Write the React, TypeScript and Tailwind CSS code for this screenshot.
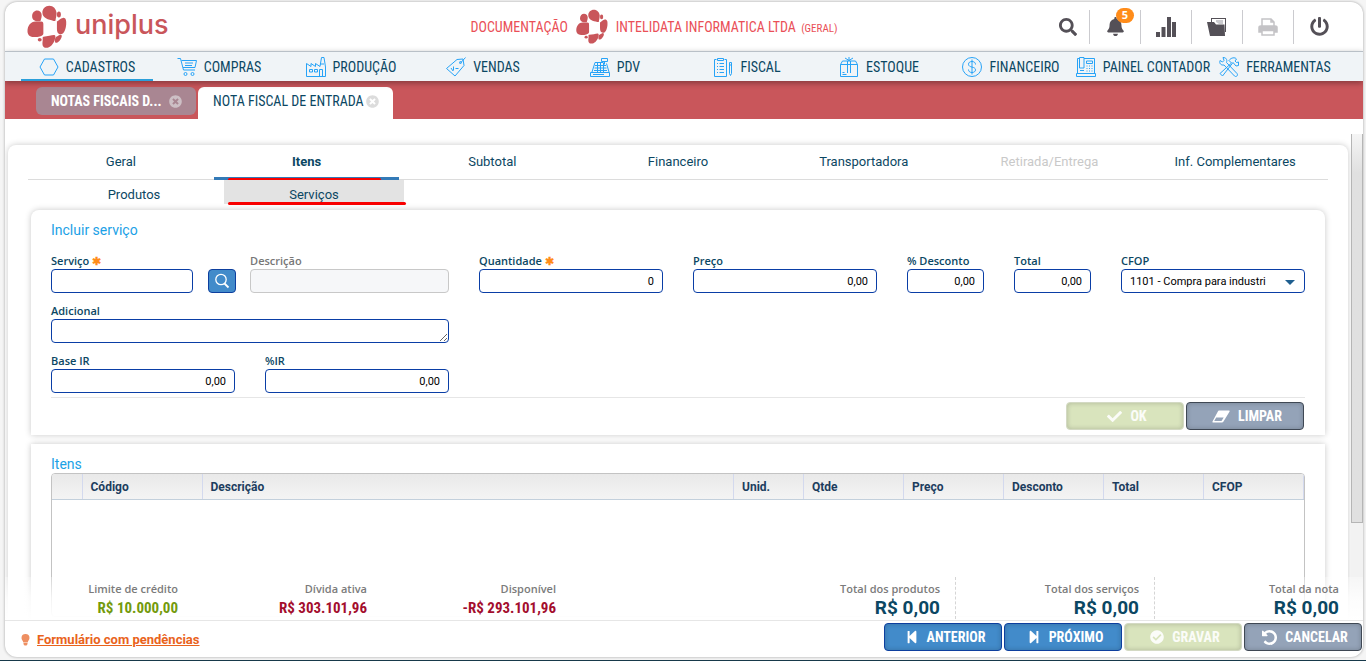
import React from 'react';
import clsx from 'clsx';
import {
  FaBell,
  FaCheck,
  FaCheckCircle,
  FaPowerOff,
  FaSearch,
  FaStepBackward,
  FaStepForward,
  FaTimesCircle,
} from 'react-icons/fa';

const narrow = "font-['Roboto_Condensed',Roboto,sans-serif]";

function PetalLogo({ className }: { className?: string }) {
  return (
    <svg viewBox="82 12 120 130" className={clsx('fill-[#c9565b]', className)} aria-hidden="true">
      <path d="M128 35c0-12 9-21 21-21s21 9 22 23c0 9-3 16-3 20 0 3-2 4-6 3-16-3-34-8-34-25z" />
      <path d="M97 46c0-10 7-17 15-17s14 5 14 14c0 8-3 13-3 16-1 3-5 2-9 2-9 0-17-4-17-15z" />
      <ellipse cx="178" cy="41" rx="6" ry="9" />
      <path d="M172 62c5-3 11-10 18-11 9-1 11 8 10 20-1 13-6 27-14 29-10 2-14-5-14-17z" />
      <path d="M107 62h17c6 0 7 3 7 9v27c0 5-4 7-11 9-14 4-37 4-37-16 0-16 10-29 24-29z" />
      <path d="M131 108c13-1 25-4 32-5 6-1 5 8 2 16-5 12-14 22-25 22-12 0-13-10-11-22 1-6-2-10 2-11z" />
      <path d="M170 108c5-2 11-8 15-6 4 3 0 13-5 18-4 5-11 8-13 5-2-4-1-15 3-17z" />
      <ellipse cx="120" cy="117" rx="6" ry="5" />
    </svg>
  );
}

function EraserIcon() {
  return (
    <svg viewBox="0 0 18 13" className="h-[13px] w-[18px] fill-current" aria-hidden="true">
      <path fillRule="evenodd" d="M7 .5h10q1 0 .6 1L11.500 11.500q-.6 1-1.500 1H1q-1 0-.5-1L6 1.200Q6.300.5 7 .5zM4.200 7.500L2.200 11h7.300l2.200-3.500z" />
    </svg>
  );
}

function UndoIcon() {
  return (
    <svg viewBox="0 0 1536 1536" className="size-[15px] fill-current" aria-hidden="true">
      <path d="M1536 768q0 156-61 298t-164 245-245 164-298 61q-172 0-327-72.500t-264-204.500q-7-10-6.500-22.500t8.500-20.500l137-138q10-9 25-9 16 2 23 12 73 95 179 147t225 52q104 0 198.500-40.500t163.500-109.500 109.500-163.500 40.500-198.500-40.500-198.500-109.500-163.500-163.500-109.500-198.500-40.500q-98 0-188 35.500t-160 101.500l137 138q31 30 14 69-17 40-59 40H64q-26 0-45-19T0 576V128q0-42 40-59 39-17 69 14l130 129q107-101 244.500-156.500t284.500-55.500q156 0 298 61t245 164 164 245 61 298z" />
    </svg>
  );
}

function LineIcon({ children }: { children: React.ReactNode }) {
  return (
    <svg
      viewBox="0 0 20 20"
      className="size-5 shrink-0 fill-none stroke-[#27a3f7]"
      strokeWidth="1"
      aria-hidden="true"
    >
      {children}
    </svg>
  );
}

const menu = [
  { label: 'CADASTROS', icon: <path d="M5.500 2h9l4.500 8-4.500 8h-9L1 10z" /> },
  {
    label: 'COMPRAS',
    icon: (
      <>
        <path d="M.5 1.500h3l3 11.500h11.500M4.500 3.500h15l-1.500 7H6M8 6h8M8 8.500h7" />
        <circle cx="8.500" cy="17" r="1.500" />
        <circle cx="15.500" cy="17" r="1.500" />
      </>
    ),
  },
  {
    label: 'PRODUÇÃO',
    icon: <path d="M.5 19.500v-13l4.500 3v-3l4.500 3v-3l4.500 3L15.500.500h2.500l1.500 9.500v9.500zM3.500 12.500h3v2.500h-3zM8.500 12.500h3v2.500h-3zM13.500 19v-6.500h3V19M14 7h4" />,
  },
  {
    label: 'VENDAS',
    icon: (
      <>
        <path d="M.5 11.500L11 2.500l6-.5 1 6.500L9 19z" />
        <path d="M14 6.500L19.500.500M5 11l2 3M7.500 9.500v4M9.500 11.500h3" />
        <circle cx="14.500" cy="5.500" r="1" />
      </>
    ),
  },
  {
    label: 'PDV',
    icon: <path d="M.5 15.500h19v4H.500zM2 15L5 5.500h8.500M16.500 6.500L19 15M11.500 1.500h6v3h-6zM14.500 4.500v3M5 8.500h11M4.500 11h12M4 13.500h13M7.500 6v9M10.500 6v9M13.500 6v9M3 17.500h11" />,
  },
  {
    label: 'FISCAL',
    icon: <path d="M3.500 2.500h-2v17h12v-17h-2M4.500 1.500h6v2h-6zM4 6.500h1M6.500 6.500H11M4 9.500h1M6.500 9.500H11M4 12.500h1M6.500 12.500H11M4 15.500h1M6.500 15.500H11M16.500 5.500h2v11l-1 2-1-2zM16.500 8h2" />,
  },
  {
    label: 'ESTOQUE',
    icon: <path d="M1.500 7.500h17v12h-17zM1.500 7.500l2-3.500h13l2 3.500M8.500 4v12M11.500 4v12M10 3.500L6 1M10 3.500L14 1M10 0v4M3.500 17.500h4M3.500 15.500h2" />,
  },
  {
    label: 'FINANCEIRO',
    icon: (
      <>
        <circle cx="10" cy="10" r="9.500" />
        <path d="M13.500 7.500c0-2-1.500-3-3.500-3s-3.500 1-3.500 2.700c0 3.800 7 2 7 5.600 0 1.700-1.500 2.700-3.500 2.700s-3.500-1-3.500-3M10 2.500v15" />
      </>
    ),
  },
  {
    label: 'PAINEL CONTADOR',
    icon: <path d="M.5 16.500h19v3H.500zM1.500 16V1.500h2M8 1.500h10.500V16M3.500.500H8v10.500H3.500zM10.500 4h6v2.500h-6zM10.500 9h1M13 9h1M15.500 9h1M10.500 11.500h1M13 11.500h1M15.500 11.500h1M10.500 14h1M13 14h1M15.500 14h1M4 13.500h4" />,
  },
  {
    label: 'FERRAMENTAS',
    icon: <path d="M1 3.500l2.500 1.500L5 3.500 4 .500c3 0 4.500 2 3.500 5l10.500 11c1.500 2-1 4-2.500 2.500L5 8C2 8.500 0 6.500 1 3.500zM10 3.500c2-3 6-3.500 7.500-1.500L16 4l1.500 1.500L19.500 5v3.500L17 9l-3-3.500L3.500 19 1 16.500 12.500 6z" />,
  },
];

function TopBar() {
  const cell = 'flex h-[34px] w-[51px] items-center justify-center border-r border-[#cbcbcf]';
  return (
    <header className="flex h-[49px] shrink-0 items-center justify-between pr-[18px] pl-[22px] text-[#545057]">
      <div className="flex flex-1 items-center gap-2 text-[#c9565b]">
        <PetalLogo className="h-[43px] w-10" />
        <span className="pb-1 font-[Inter,sans-serif] text-[27px] leading-8 font-medium">uniplus</span>
      </div>
      <div className={clsx('flex items-center gap-2 pr-16 text-sm whitespace-nowrap text-[#ea4f57]', narrow)}>
        <span>DOCUMENTAÇÃO</span>
        <PetalLogo className="h-[35px] w-8" />
        <span>
          INTELIDATA INFORMATICA LTDA <span className="pl-0.5 text-[11px]">(GERAL)</span>
        </span>
      </div>
      <div className="flex flex-1 items-center justify-end">
        <button type="button" aria-label="Pesquisar" className="flex h-[34px] w-11 items-center justify-center border-r border-[#cbcbcf]">
          <FaSearch size={18} />
        </button>
        <button type="button" aria-label="Notificações" className={clsx(cell, 'relative')}>
          <FaBell size={19} />
          <span className="absolute -top-0.5 right-1.5 flex h-[15px] w-[18px] items-center justify-center rounded-full bg-[#ff8c1a] font-['Open_Sans',sans-serif] text-[11px] font-bold text-white">
            5
          </span>
        </button>
        <button type="button" aria-label="Indicadores" className={cell}>
          <svg viewBox="0 0 20 20" className="size-5 fill-current">
            <path d="M0 15h4v5H0zM5.500 10h4v10h-4zM11 0h4v20h-4zM16 5h4v15h-4z" />
          </svg>
        </button>
        <button type="button" aria-label="Arquivos" className={cell}>
          <svg viewBox="0 0 20 20" className="size-5 fill-current">
            <path d="M4 6V1h15v14h-1V2H5v4z" />
            <path d="M9 3h7v4h-4L9 5z" className="fill-[#cbcbcf]" />
            <path d="M0 5h7l2 2.500h8.500L18 19H3z" />
          </svg>
        </button>
        <button type="button" aria-label="Imprimir" disabled className={clsx(cell, 'text-[#c4c3c6]')}>
          <svg viewBox="0 0 20 18" className="h-[18px] w-5 fill-none stroke-current" strokeWidth="1.500">
            <path d="M4 8V1h9l3 3v4M13 1v3h3" />
            <path d="M1 14V9.500Q1 8 3 8h14q2 0 2 1.500V14h-3v-2H4v2z" className="fill-current" />
            <path d="M4 12.500h12V17H4z" className="fill-white" />
          </svg>
        </button>
        <button type="button" aria-label="Sair" className="flex h-[34px] w-[51px] items-center justify-center">
          <FaPowerOff size={19} />
        </button>
      </div>
    </header>
  );
}

function Menu() {
  return (
    <nav className="relative z-10 grid h-[30px] shrink-0 grid-cols-10 border-t border-[#b9c0c7] bg-[#f0f4f7] pr-[22px] pl-4 shadow-[0_2px_6px_rgba(0,0,0,0.35)]">
      {menu.map((item, i) => (
        <a
          key={item.label}
          href="#"
          className={clsx(
            'flex items-center justify-center gap-[7px] border-b-2 pt-0.5 text-sm whitespace-nowrap text-[#0b4763]',
            narrow,
            i === 0 ? 'border-[#2b9fda]' : 'border-transparent',
          )}
        >
          <LineIcon>{item.icon}</LineIcon>
          {item.label}
        </a>
      ))}
    </nav>
  );
}

function OpenTabs() {
  return (
    <div className={clsx('flex h-[38px] shrink-0 items-end gap-0.5 bg-[#c9565b] pl-[31px] text-sm whitespace-nowrap', narrow)}>
      <div className="mb-1 flex h-7 w-40 items-center justify-between rounded-md bg-[#a98692] pr-3.5 pl-[15px] font-bold text-white">
        <span>NOTAS FISCAIS D...</span>
        <button type="button" aria-label="Fechar Notas Fiscais" className="text-[#cdbfc5]">
          <FaTimesCircle size={13} />
        </button>
      </div>
      <div className="flex h-8 w-[195px] items-center justify-between rounded-t-md bg-white pr-3.5 pb-1 pl-[15px] text-[#0b4763]">
        <span>NOTA FISCAL DE ENTRADA</span>
        <button type="button" aria-label="Fechar Nota Fiscal" className="text-[#dcdcdc]">
          <FaTimesCircle size={13} />
        </button>
      </div>
    </div>
  );
}

const sections = ['Geral', 'Itens', 'Subtotal', 'Financeiro', 'Transportadora', 'Retirada/Entrega', 'Inf. Complementares'];

function SectionTabs() {
  return (
    <>
      <div className="mx-5 grid h-[35px] grid-cols-7 border-b border-[#dcdcdc]">
        {sections.map((name) => (
          <button
            key={name}
            type="button"
            disabled={name === 'Retirada/Entrega'}
            className={clsx(
              'relative -mb-px border-b-3 pt-0.5 text-[13px] text-[#0b4763] disabled:text-[#c9c9c9]',
              name === 'Itens' ? 'border-[#337ab7] font-bold' : 'border-transparent',
            )}
          >
            {name}
            {name === 'Itens' && (
              <span className="absolute right-[18px] -bottom-1 left-3.5 h-[3px] rounded-full bg-[#f80000]" />
            )}
          </button>
        ))}
      </div>
      <div className="flex h-6 pl-9 text-[13px] text-[#0b4763]">
        <button type="button" className="w-[180px] pt-[5px]">Produtos</button>
        <button type="button" className="relative w-[180px] bg-[#e3e3e3] pt-[5px]">
          Serviços
          <span className="absolute -right-0.5 -bottom-px left-1 h-[3px] rounded-full bg-[#f80000]" />
        </button>
      </div>
    </>
  );
}

type FieldProps = {
  id: string;
  label: string;
  value?: string;
  required?: boolean;
  disabled?: boolean;
  className?: string;
};

const labelStyle = "block h-4 font-['Open_Sans',sans-serif] text-[11px] leading-4 font-semibold whitespace-nowrap";
const boxStyle = 'block h-6 w-full rounded-sm border border-[#0a3ea6] bg-white px-2 text-[11px] text-black outline-none';

function Field({ id, label, value = '', required, disabled, className }: FieldProps) {
  return (
    <div className={className}>
      <label htmlFor={id} className={clsx(labelStyle, disabled ? 'text-[#777]' : 'text-[#0b4763]')}>
        {label} {required && <span className="text-[#ff8c1a]">✱</span>}
      </label>
      <input
        id={id}
        type="text"
        defaultValue={value}
        disabled={disabled}
        className={clsx(boxStyle, 'text-right disabled:border-[#c8c8c8] disabled:bg-[#f6f7f9]')}
      />
    </div>
  );
}

type ActionProps = {
  icon: React.ReactNode;
  tone: 'blue' | 'green' | 'gray';
  children: React.ReactNode;
};

const tones = {
  blue: 'border-[#0d3f9e] bg-[#428bca] text-white',
  green: 'border-[#d3d9c3] bg-[#d9e4bd] text-white/90',
  gray: 'border-[#3f4854] bg-[#94a3b8] text-white',
};

function Action({ icon, tone, children }: ActionProps) {
  return (
    <button
      type="button"
      disabled={tone === 'green'}
      className={clsx(
        'flex h-7 w-[118px] items-center justify-center gap-2 rounded-sm border pl-1 text-sm font-bold shadow-[inset_0_0_5px_rgba(0,0,0,0.2)]',
        narrow,
        tones[tone],
      )}
    >
      {icon}
      {children}
    </button>
  );
}

const cardShadow = 'shadow-[0_0_6px_rgba(0,0,0,0.22)]';

function ServiceForm() {
  return (
    <section className={clsx('mx-[23px] mt-1.5 rounded-t-lg bg-white px-5 pt-3 pb-[5px]', cardShadow)}>
      <h2 className="text-sm leading-4 text-[#1ba1e6]">Incluir serviço</h2>
      <form className="mt-[15px] grid grid-cols-12 gap-x-[30px] gap-y-2.5">
        <div className="col-span-4 flex items-end">
          <Field id="servico" label="Serviço" required className="flex-5" />
          <button
            type="button"
            aria-label="Buscar serviço"
            className="mr-3.5 ml-[15px] flex h-6 w-7 items-center justify-center rounded-sm border border-[#0d3f9e] bg-[#428bca] text-white"
          >
            <svg viewBox="0 0 16 16" className="size-4 fill-none stroke-current" strokeWidth="1.300">
              <circle cx="7" cy="6.500" r="5.200" />
              <path d="M10.500 10.500l4 4" strokeWidth="1.800" />
            </svg>
          </button>
          <Field id="descricao" label="Descrição" disabled className="flex-7" />
        </div>
        <Field id="quantidade" label="Quantidade" value="0" required className="col-span-2" />
        <Field id="preco" label="Preço" value="0,00" className="col-span-2" />
        <Field id="desconto" label="% Desconto" value="0,00" />
        <Field id="total" label="Total" value="0,00" />
        <div className="relative col-span-2">
          <label htmlFor="cfop" className={clsx(labelStyle, 'text-[#0b4763]')}>CFOP</label>
          <select id="cfop" className={clsx(boxStyle, 'appearance-none pt-0.5 pr-9')}>
            <option>1101 - Compra para industri</option>
          </select>
          <svg viewBox="0 0 10 5" className="pointer-events-none absolute right-2.5 bottom-2 h-[5px] w-2.5 fill-[#1f5f8f]">
            <path d="M0 0h10L5 5z" />
          </svg>
        </div>
        <div className="col-span-4">
          <label htmlFor="adicional" className={clsx(labelStyle, 'text-[#0b4763]')}>Adicional</label>
          <textarea id="adicional" rows={1} className={boxStyle} />
        </div>
        <Field id="base-ir" label="Base IR" value="0,00" className="col-span-2 col-start-1" />
        <Field id="ir" label="%IR" value="0,00" className="col-span-2" />
      </form>
      <div className="mt-1 flex justify-end gap-0.5 border-t border-[#e6e6e6] pt-1 pr-px">
        <Action tone="green" icon={<FaCheck size={15} />}>OK</Action>
        <Action tone="gray" icon={<EraserIcon />}>LIMPAR</Action>
      </div>
    </section>
  );
}

const columns = [
  { name: '', width: 'w-[30px]' },
  { name: 'Código', width: 'w-[120px]' },
  { name: 'Descrição', width: '' },
  { name: 'Unid.', width: 'w-[70px]' },
  { name: 'Qtde', width: 'w-[100px]' },
  { name: 'Preço', width: 'w-[100px]' },
  { name: 'Desconto', width: 'w-[100px]' },
  { name: 'Total', width: 'w-[100px]' },
  { name: 'CFOP', width: 'w-[100px]' },
];

function ItemsGrid() {
  return (
    <section className={clsx('mx-[23px] mt-[9px] bg-white px-5 pt-3 pb-10', cardShadow)}>
      <h2 className="mb-px text-sm leading-4 text-[#1ba1e6]">Itens</h2>
      <div className="min-h-36 overflow-hidden rounded-sm border border-[#c3c3c3]">
        <table className="w-full table-fixed border-collapse text-left text-xs text-[#1c3d5e]">
          <thead>
            <tr className="h-[25px] bg-linear-to-b from-[#e9e9e9] to-[#f4f4f4]">
              {columns.map((col) => (
                <th
                  key={col.name}
                  className={clsx('border-r border-b border-r-[#d3d9ee] border-b-[#c3d0dc] px-2 pt-0.5 font-bold', col.width)}
                >
                  {col.name}
                </th>
              ))}
            </tr>
          </thead>
          <tbody />
        </table>
      </div>
    </section>
  );
}

function Amount({ label, value, className }: { label: string; value: string; className: string }) {
  return (
    <div className={clsx('text-right whitespace-nowrap', className)}>
      <div className="font-['Open_Sans',sans-serif] text-[11px] leading-4 font-semibold text-[#7b7b7b]">{label}</div>
      {value}
    </div>
  );
}

function Summary() {
  const small = clsx('text-[15px] font-bold leading-[22px]', narrow);
  const large = 'w-[199px] text-[19px] font-bold leading-[22px] text-[#0b4763] border-dashed border-[#d5d5d5] pt-1 pr-[15px]';
  return (
    <div className="absolute inset-x-0 bottom-0 z-10 flex justify-between bg-linear-to-b from-white/30 via-white/80 to-white pr-[9px]">
      <div className="flex pt-1">
        <Amount label="Limite de crédito" value="R$ 10.000,00" className={clsx(small, 'w-[173px] text-[#739a0c]')} />
        <Amount label="Dívida ativa" value="R$ 303.101,96" className={clsx(small, 'w-[189px] text-[#a30d2d]')} />
        <Amount label="Disponível" value="-R$ 293.101,96" className={clsx(small, 'w-[189px] text-[#a30d2d]')} />
      </div>
      <div className="flex pb-px">
        <Amount label="Total dos produtos" value="R$ 0,00" className={clsx(large, 'border-r')} />
        <Amount label="Total dos serviços" value="R$ 0,00" className={clsx(large, 'border-r')} />
        <Amount label="Total da nota" value="R$ 0,00" className={large} />
      </div>
    </div>
  );
}

export default function App() {
  return (
    <div className="flex h-screen flex-col overflow-hidden bg-[#f5f5f5] pt-0.5 font-[Roboto,sans-serif]">
      <div className="mr-[3px] mb-[3px] ml-[5px] flex min-h-0 flex-1 flex-col overflow-hidden rounded-xl bg-white shadow-[0_0_3px_rgba(0,0,0,0.35)]">
        <TopBar />
        <Menu />
        <OpenTabs />
        <main className="relative flex min-h-0 flex-1 overflow-hidden">
          <div className="min-w-0 flex-1 overflow-hidden px-[3px] pt-[26px]">
            <div className={clsx('rounded-lg bg-white', cardShadow)}>
              <SectionTabs />
              <ServiceForm />
              <ItemsGrid />
            </div>
          </div>
          <div className="flex w-3 flex-col pt-[15px]">
            <div className="flex-4 border-x border-b border-[#b5b5b5] bg-linear-to-b from-[#f5f5f5] via-[#e0e0e0] via-10% to-[#e0e0e0]" />
            <div className="flex-1 bg-[#f2f2f2]" />
          </div>
          <Summary />
        </main>
        <footer className="flex h-[37px] shrink-0 items-start justify-between border-t border-[#e6e6e6] pt-0.5 pr-px pl-4">
          <div className="flex h-[34px] items-center gap-[7px] text-[#e9631c]">
            <svg viewBox="0 0 9 12" className="h-3 w-[9px] fill-[#ee8f62]" aria-hidden="true">
              <path d="M4.500 0a4 4 0 0 1 4 4c0 1.800-1.500 2.700-1.800 4.500H2.300C2 6.700.5 5.800.5 4a4 4 0 0 1 4-4zM2.500 9h4v1.200L5.500 11.500h-2l-1-1.300z" />
            </svg>
            <a href="#" className="text-[13px] font-bold underline">
              Formulário com pendências
            </a>
          </div>
          <div className="flex gap-0.5">
            <Action tone="blue" icon={<FaStepBackward size={14} />}>ANTERIOR</Action>
            <Action tone="blue" icon={<FaStepForward size={14} />}>PRÓXIMO</Action>
            <Action tone="green" icon={<FaCheckCircle size={14} />}>GRAVAR</Action>
            <Action tone="gray" icon={<UndoIcon />}>CANCELAR</Action>
          </div>
        </footer>
      </div>
      <div className="h-px shrink-0 bg-[#17394a]" />
    </div>
  );
}
